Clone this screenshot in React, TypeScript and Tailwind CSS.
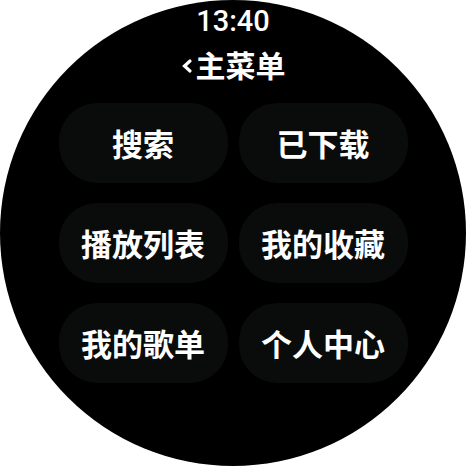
import React from "react";

const items = ["搜索", "已下载", "播放列表", "我的收藏", "我的歌单", "个人中心"];

const cjk = { fontFamily: '"Noto Sans CJK SC", "Noto Sans", sans-serif' };

export default function App() {
  return (
    <div className="w-[466px] h-[466px] bg-white">
      <div className="w-[466px] h-[466px] rounded-full bg-black overflow-hidden flex flex-col items-center text-white">
        <div
          className="mt-[6px] text-[29px] leading-[30px] font-medium"
          style={{ fontFamily: "Roboto, sans-serif" }}
        >
          13:40
        </div>
        <div className="mt-[10px] flex items-center h-[36px]" style={cjk}>
          <svg width="12" height="16" viewBox="0 0 12 16" className="mr-[3px] mt-[3px]">
            <polyline points="9,3 3.5,8 9,13" fill="none" stroke="white" strokeWidth="3.2" strokeLinecap="round" strokeLinejoin="miter" />
          </svg>
          <span className="text-[30px] leading-[36px] font-bold">主菜单</span>
        </div>
        <div className="mt-[21px] grid grid-cols-[169px_169px] gap-x-[11px] gap-y-[20px]" style={cjk}>
          {items.map((label) => (
            <div
              key={label}
              className="h-[80px] rounded-[38px] bg-[#090c0a] flex items-center justify-center text-[31px] font-bold"
            >
              {label}
            </div>
          ))}
        </div>
      </div>
    </div>
  );
}
